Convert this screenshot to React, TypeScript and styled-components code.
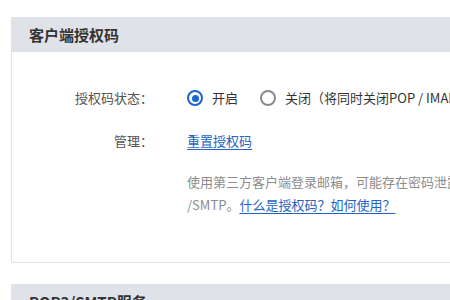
import React from "react";
import styled, { createGlobalStyle } from "styled-components";

const GlobalStyle = createGlobalStyle`
  html, body {
    margin: 0;
    padding: 0;
    background: #ffffff;
    overflow: hidden;
  }
  body {
    font-family: "Noto Sans CJK SC", "Noto Sans", sans-serif;
    color: #333333;
  }
`;

const Page = styled.div`
  padding: 17px 0 0 11px;
  width: 760px;
`;

const Section = styled.section`
  margin-bottom: 21px;
`;

const SectionHead = styled.div`
  height: 35px;
  background: #dfe2e6;
  display: flex;
  align-items: center;
  padding-left: 18px;
  font-size: 15px;
  font-weight: 700;
  color: #333333;
`;

const SectionBody = styled.div`
  border: 1px solid #e3e3e3;
  border-top: none;
  padding: 32px 0 46px;
  display: flex;
  flex-direction: column;
  gap: 15px;
`;

const Row = styled.div`
  display: flex;
  align-items: flex-start;
  font-size: 13px;
  line-height: 28px;
`;

const Label = styled.div`
  width: 141px;
  flex: none;
  text-align: right;
  color: #555555;
  margin-right: 34px;
`;

const Value = styled.div`
  display: flex;
  align-items: center;
  color: #333333;
`;

const RadioItem = styled.label`
  display: flex;
  align-items: center;
  margin-right: 22px;
  white-space: nowrap;
`;

const RadioDot = styled.span<{ $on?: boolean }>`
  width: 16px;
  height: 16px;
  box-sizing: border-box;
  border-radius: 50%;
  border: 2px solid ${(p) => (p.$on ? "#1c64d4" : "#8a8a8a")};
  margin-right: 9px;
  display: flex;
  align-items: center;
  justify-content: center;
  &::after {
    content: "";
    width: 7px;
    height: 7px;
    border-radius: 50%;
    background: ${(p) => (p.$on ? "#1c64d4" : "transparent")};
  }
`;

const Link = styled.a`
  color: #2463c4;
  text-decoration: underline;
  text-underline-offset: 3px;
  cursor: pointer;
`;

const Hint = styled.div`
  color: #8c8c8c;
  font-size: 13px;
  line-height: 23px;
  white-space: nowrap;
`;

export default function App() {
  return (
    <>
      <GlobalStyle />
      <Page>
        <Section>
          <SectionHead>客户端授权码</SectionHead>
          <SectionBody>
            <Row>
              <Label>授权码状态：</Label>
              <Value>
                <RadioItem>
                  <RadioDot $on />
                  开启
                </RadioItem>
                <RadioItem>
                  <RadioDot />
                  关闭（将同时关闭POP / IMAP / SMTP服务）
                </RadioItem>
              </Value>
            </Row>
            <Row>
              <Label>管理：</Label>
              <Value>
                <Link>重置授权码</Link>
              </Value>
            </Row>
            <Row>
              <Label />
              <Hint>
                使用第三方客户端登录邮箱，可能存在密码泄露风险，建议开启授权码登录POP / IMAP
                <br />
                /SMTP。<Link>什么是授权码？如何使用？</Link>
              </Hint>
            </Row>
          </SectionBody>
        </Section>
        <Section>
          <SectionHead>POP3/SMTP服务</SectionHead>
        </Section>
      </Page>
    </>
  );
}
